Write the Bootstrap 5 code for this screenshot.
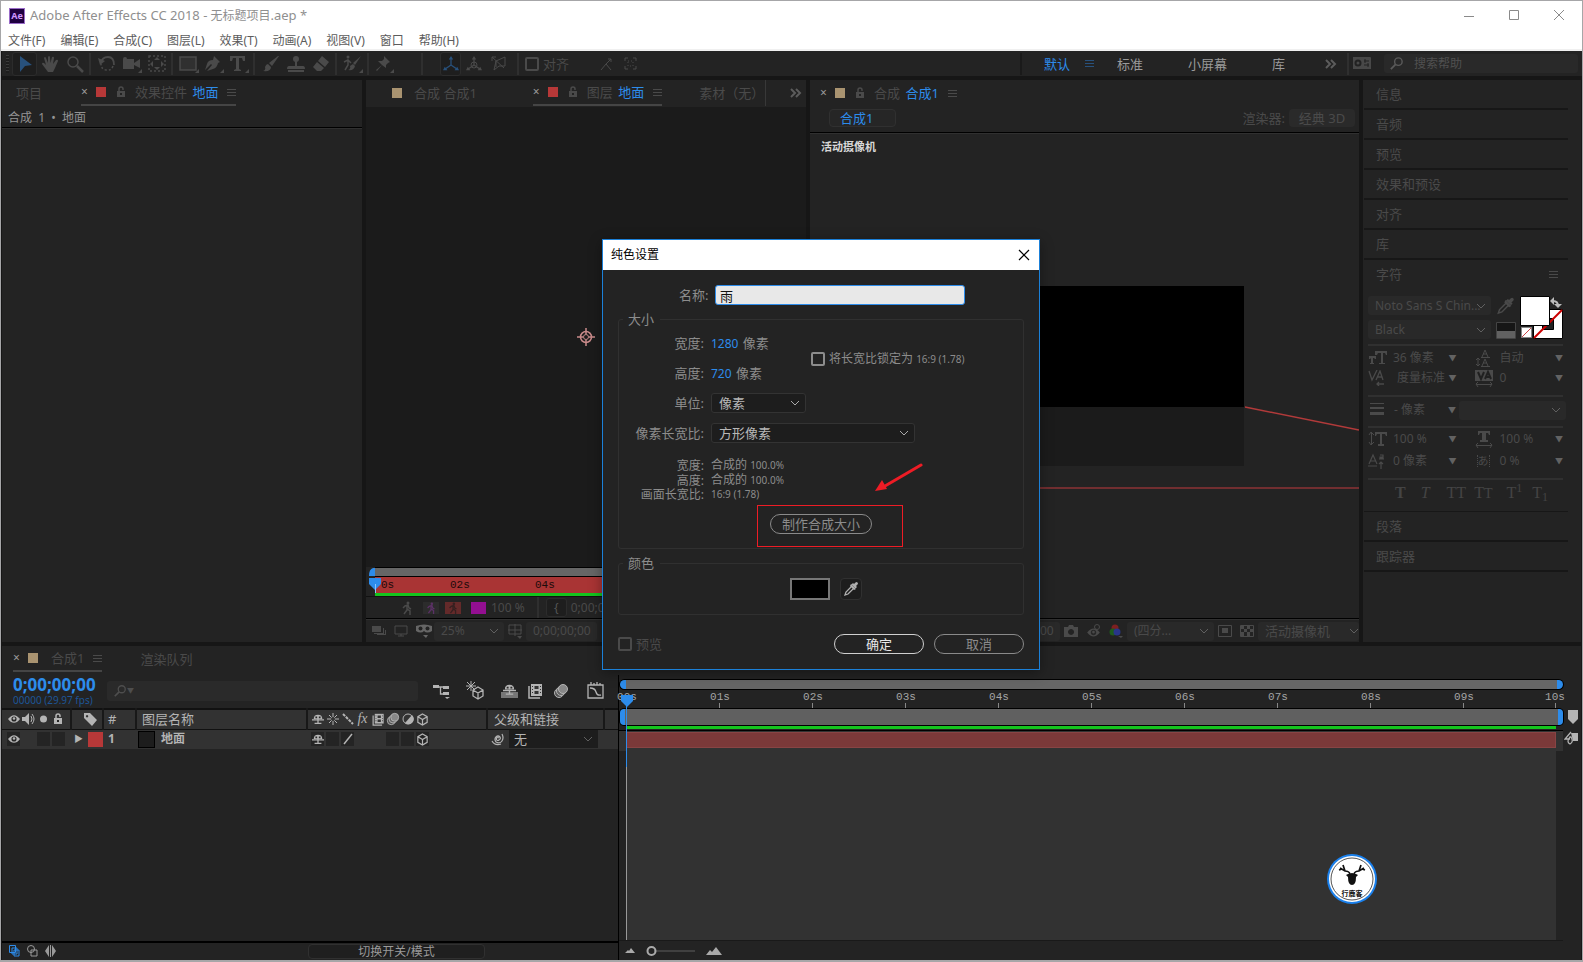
<!DOCTYPE html>
<html lang="zh-CN">
<head>
<meta charset="utf-8">
<meta name="viewport" content="width=device-width, initial-scale=1">
<title>Adobe After Effects CC 2018 - 无标题项目.aep *</title>
<link href="https://cdn.jsdelivr.net/npm/bootstrap@5.3.0/dist/css/bootstrap.min.css" rel="stylesheet">
<script src="https://cdn.jsdelivr.net/npm/bootstrap@5.3.0/dist/js/bootstrap.bundle.min.js"></script>
<style>
:root{--bg:#232323;--gap:#161616;--dim:#4a4a4a;--mid:#8c8c8c;--lit:#b4b4b4;--blue:#2d8ceb;--field:#292929}
html,body{height:100%}
body{font:13px/20px "Noto Sans","Noto Sans CJK SC",sans-serif;background:var(--gap);color:var(--dim);overflow:hidden}
button{padding:0;border:0;background:none;color:inherit;font:inherit;line-height:inherit}
a{color:inherit;text-decoration:none}
svg{flex:none;display:block;fill:currentColor}
.ln{fill:none;stroke:currentColor}
.window{min-height:100%;height:100vh;border:1px solid #a6a6a8;border-width:1px 1px 2px 1px}
.titlebar{height:29px;background:#fff;color:#8f8f8f;font-size:12px;padding-left:8px}
.titlebar .cap{width:45px;height:28px;color:#8a8a8a}
.aelogo{width:16px;height:16px;background:#1f0040;border:1px solid #9a6cc9;color:#cf96fd;font-size:9px;line-height:13px;font-weight:700;text-align:center;margin-right:5px}
.menubar{height:21px;background:#fff;border-bottom:2px solid #f0f0f0;color:#5c5c5c;font-size:12px;padding:2px 0 0 7px;gap:15px}
.toolbar{height:25px;background:var(--bg);margin-left:1px}
.tool{width:25px;height:24px;display:flex;align-items:center;justify-content:center}
.tool.on{background:#1e1e1e;border:1px solid #2c2c2c;border-radius:3px;color:#28517c}
.vsep{width:2px;height:22px;background:#2f2f2f;margin:0 3px 0 2px;flex:none}
.grip{width:3px;height:18px;margin:0 3px 0 4px;background:repeating-linear-gradient(#3a3a3a 0 1px,#1d1d1d 1px 3px)}
.tick{appearance:none;width:14px;height:14px;border:2px solid currentColor;border-radius:2px;margin:0;flex:none;background:transparent;color:inherit}
.helpbox{width:194px;height:19px;background:var(--field);border-radius:3px;margin-right:4px;padding-left:5px}
.helpbox input,.quick input{background:none;border:0;outline:0;color:inherit;font-size:12px;padding:0;width:120px}
.helpbox input{margin-left:10px}
.helpbox input::placeholder{color:#505050}
.upper{display:grid;grid-template-columns:minmax(0,360fr) minmax(0,440fr) minmax(0,549fr) minmax(0,218fr);gap:4px;margin:4px 1px;flex:1;min-height:0}
.pane{background:var(--bg);min-width:0;min-height:0;display:flex;flex-direction:column;position:relative}
.tabs{height:27px;display:flex;align-items:stretch;white-space:nowrap;overflow:hidden;flex:none}
.tabx{display:flex;align-items:center;height:26px}
.tabx.cur{border-bottom:2px solid #454545}
.tabx .bl{margin-left:2px}
.tabx .lk{margin:0 9px 0 10px}
.tabx .hm{margin-left:9px}
.x{color:#9a9a9a;font-size:12px;width:7px;line-height:20px}
.sw{width:10px;height:10px;flex:none}
.red{background:#b73838}.tan{background:#a99370}
.bl{color:var(--blue)}
.rule{height:2px;background:#000;border-bottom:1px solid #303030;flex:none}
.crumb{height:20px;padding-left:6px;font-size:12px;color:#949494;line-height:22px;word-break:keep-all}
.stage{flex:1;min-height:0;position:relative;background:#1b1b1b}
.overlay{position:absolute}
.foot{height:22px;display:flex;align-items:center;flex:none;white-space:nowrap;overflow:hidden;font-size:12px}
.sel{appearance:none;border:0;border-radius:3px;background:var(--field) url("data:image/svg+xml,%3Csvg xmlns='http://www.w3.org/2000/svg' width='10' height='6'%3E%3Cpath d='M1 1l4 4 4-4' fill='none' stroke='%23606060'/%3E%3C/svg%3E") no-repeat right 5px center;color:inherit;font-size:12px;height:19px;padding:0 7px;line-height:18px}
.acc{height:28px;line-height:26px;padding-left:13px;flex:none;text-align:left;display:block;width:100%}
.accline{height:2px;background:#171717;margin:0 13px 0 1px;flex:none}
.chline{height:2px;background:#303030;margin-right:3px}
.chrow{display:grid;grid-template-columns:25px minmax(0,1fr) 14px 15px 25px minmax(0,1fr) 14px;align-items:center;height:20px;white-space:nowrap;font-size:12px}
.chrow button,.arw{font-size:8px;text-align:center;color:#626262}
.tall .chrow{height:22px}
.serif{font-family:"Liberation Serif",serif;font-weight:700;font-size:18px;color:#444}
.timeline{height:314px;background:var(--bg);margin:0 1px;display:grid;grid-template-columns:minmax(0,617fr) minmax(0,962fr);grid-template-rows:29px 1fr;flex:none}
.tc{font-size:17px;font-weight:700;line-height:18px;color:var(--blue)}
.fps{font-size:10px;line-height:12px;color:#1d5596}
.quick{width:311px;height:20px;background:#2a2a2a;border-radius:3px;padding-left:6px}
.lay{table-layout:fixed;width:100%;border-collapse:collapse;color:var(--lit);line-height:18px;background:#323232}
.lay td,.lay th{padding:0;height:20px;border-top:2px solid #111;font-weight:400;white-space:nowrap;overflow:hidden}
.lay td{border-top-width:1px}
.lay th{border-right:2px solid #181818}
.cell{width:13px;height:14px;margin-right:2px;display:flex;align-items:center;justify-content:center;background:#242424}
.cell.no{background:none}
.hic{width:15px;display:flex;justify-content:center}
.tr{position:relative;display:flex;flex-direction:column;min-width:0;margin-right:18px}
.nav-strip{height:9px;background:#666;border:solid var(--blue);border-width:0 6px;border-radius:5px;box-shadow:0 0 0 1px #000}
.ruler{display:grid;grid-template-columns:repeat(10,minmax(0,1fr));height:20px;margin:0 7px 0 7px}
.ruler span{border-left:1px solid #777;border-image:linear-gradient(transparent 70%,#888 70%) 1;height:20px;font:11px/17px "Liberation Mono",monospace;color:#a5a5a5}
.ruler b{font-weight:400;display:block;width:30px;margin-left:-15px;text-align:center}
.wa{height:16px;background:#606060;border:solid var(--blue);border-width:0 5px;border-radius:4px;box-shadow:0 0 0 1px #000}
.green{height:3px;background:#14c41e;margin:1px 7px 1px 7px}
.dialogbox{position:absolute;left:602px;top:239px;width:438px;background:var(--bg);border:1px solid #1b80d8;color:var(--mid);box-shadow:0 3px 12px rgba(0,0,0,.35)}
.dhead{height:30px;background:#fff;color:#000;font-size:12px;padding:0 9px 0 8px}
.dbody{padding:15px 15px 15px}
.nm{width:250px;height:20px;border:1px solid var(--blue);border-radius:3px;background:#e8e8e8;color:#111;padding:0 4px;font-size:13px;line-height:18px;outline:0}
.grp{border:1px solid #303030;border-radius:3px;position:relative;padding:0;margin:0}
.grp legend{float:none;width:auto;font-size:13px;line-height:20px;padding:0 6px 0 5px;margin:0 0 0 4px;height:20px}
.drow{display:grid;grid-template-columns:85px 1fr;column-gap:7px;height:30px;align-items:center}
.drow>label,.drow>span:first-child{text-align:right;white-space:nowrap}
.num{font-size:12px;margin-right:1px}
.irow{height:15px;font-size:12px;line-height:15px}
.dsel{background-color:#1d1d1d;border:1px solid #333;color:#b8b8b8;height:20px;font-size:13px;background-image:url("data:image/svg+xml,%3Csvg xmlns='http://www.w3.org/2000/svg' width='10' height='6'%3E%3Cpath d='M1 1l4 4 4-4' fill='none' stroke='%23aaa'/%3E%3C/svg%3E")}
.pill{height:20px;border:1px solid #8a8a8a;border-radius:10px;line-height:18px;text-align:center}
.mini{font-size:10px}
</style>
</head>
<body>
<svg width="0" height="0" class="position-absolute">
<symbol id="lock" viewBox="0 0 10 12"><path d="M1 5h8v6H1z"/><path class="ln" stroke-width="1.5" d="M3 5V3a2 2 0 0 1 4 0v1"/><path fill="#232323" d="M4 7h2v2H4z"/></symbol>
<symbol id="ham" viewBox="0 0 9 9"><path class="ln" d="M0 1.5h9M0 4.5h9M0 7.5h9"/></symbol>
<symbol id="chev2" viewBox="0 0 12 10"><path class="ln" stroke-width="2" d="M1 1l4 4-4 4M6 1l4 4-4 4"/></symbol>
<symbol id="mag" viewBox="0 0 16 16"><circle class="ln" stroke-width="1.5" cx="10" cy="6" r="4"/><path class="ln" stroke-width="2" d="M7 9l-5 5"/></symbol>
<symbol id="eye" viewBox="0 0 14 10"><path d="M0 5q7-9 14 0q-7 9-14 0z"/><circle cx="7" cy="5" r="3" fill="#282828"/><circle cx="7" cy="4.500" r="1.500"/></symbol>
<symbol id="drop" viewBox="0 0 16 16"><path d="M9 3l1-1 1 1 1.500-1.500q1-1 2 0t0 2L13 5l1 1-1 1-1 0-4-4z"/><path d="M8 3l5 5-2 1-4-4z"/><path class="ln" stroke-width="1.300" d="M9 5l-6 6-1 3 3-1 6-6"/></symbol>
<symbol id="cube" viewBox="0 0 14 14"><path class="ln" stroke-width="1.300" d="M7 1l5 3v6l-5 3-5-3V4zM2 4l5 3 5-3M7 7v6"/></symbol>
<symbol id="shy" viewBox="0 0 14 14"><path d="M2 7q0-5 5-5t5 5z"/><path class="ln" stroke-width="1.500" d="M0 8h14M7 7v5M3 12h8"/><path fill="#292929" d="M4 4h2v2H4zM8 4h2v2H8z"/></symbol>
<symbol id="film" viewBox="0 0 16 16"><path d="M4 1h11v12H4z"/><path class="ln" stroke-width="1.500" d="M2 3v12h11"/><path fill="#333" d="M7.500 3h4v3h-4zM7.500 8h4v3h-4zM5 3h1v1H5zM5 6h1v1H5zM5 9h1v1H5zM13 3h1v1h-1zM13 6h1v1h-1zM13 9h1v1h-1z"/></symbol>
<symbol id="blur" viewBox="0 0 16 16"><circle cx="6" cy="10" r="4.500" fill="#555" stroke="currentColor"/><circle cx="8" cy="8" r="4.500" fill="#666" stroke="currentColor"/><circle cx="10" cy="6" r="4.500" fill="#888" stroke="currentColor"/></symbol>
<symbol id="man" viewBox="0 0 12 14"><circle cx="7" cy="2" r="1.500"/><path class="ln" stroke-width="1.500" d="M2 7l2-2 3-1 1 3 2 1M6 5v4l-3 4M6 8l3 2v4"/></symbol>
<symbol id="spiral" viewBox="0 0 14 14"><path class="ln" stroke-width="1.200" d="M8 6a1.500 1.500 0 1 0 0 2q2-1 1-3-2-2-4 0t0 5q4 2 6-1t0-7M1 9q3 5 9 3"/></symbol>
<symbol id="axis" viewBox="0 0 18 18"><path class="ln" stroke-width="1.400" d="M9 10V2M9 10l-7 5M9 10l7 5"/><path d="M9 0l2.500 4h-5zM0 16l2-4 3 4zM18 16l-2-4-3 4z"/></symbol>
</svg>

<div class="window d-flex flex-column">
  <header class="titlebar d-flex align-items-center">
    <span class="aelogo">Ae</span><span><span style="font-size:13px">Adobe After Effects CC 2018 -</span> 无标题项目<span style="font-size:13px">.aep *</span></span>
    <div class="ms-auto d-flex">
      <button class="cap d-flex justify-content-center align-items-center" aria-label="最小化"><svg width="11" height="11"><path class="ln" d="M0 6.500h10"/></svg></button>
      <button class="cap d-flex justify-content-center align-items-center" aria-label="最大化"><svg width="11" height="11"><path class="ln" d="M.5.500h9v9h-9z"/></svg></button>
      <button class="cap d-flex justify-content-center align-items-center" aria-label="关闭"><svg width="11" height="11"><path class="ln" d="M0 0l10 10M10 0L0 10"/></svg></button>
    </div>
  </header>
  <nav class="menubar d-flex align-items-center">
    <a href="#">文件(F)</a><a href="#">编辑(E)</a><a href="#">合成(C)</a><a href="#">图层(L)</a><a href="#">效果(T)</a><a href="#">动画(A)</a><a href="#">视图(V)</a><a href="#">窗口</a><a href="#">帮助(H)</a>
  </nav>

  <div class="toolbar d-flex align-items-center">
    <span class="grip"></span>
    <button class="tool on" aria-label="选取"><svg width="14" height="18"><path d="M2 1l12 9-7 1-5 6z"/></svg></button>
    <button class="tool" aria-label="手形"><svg width="18" height="18"><path d="M7 17L1 9q0-2 2-1l2 2L3 3q1-2 2 0l2 5V2q1-2 2 0l.5 6L11 2q2-1 2 1l-1 6 3-4q2-1 2 1l-3 7-2 4z"/></svg></button>
    <button class="tool" aria-label="缩放"><svg width="18" height="18"><circle class="ln" stroke-width="1.500" cx="7" cy="7" r="5"/><path class="ln" stroke-width="2.500" d="M11 11l6 6"/></svg></button>
    <i class="vsep"></i>
    <button class="tool" aria-label="旋转"><svg width="18" height="18"><path class="ln" stroke-width="1.800" d="M3 8q1-6 7-6t6 8"/><path class="ln" stroke-width="1.500" stroke-dasharray="2 2" d="M15 11q-2 5-7 4t-5-6"/><path d="M0 3l2 7 5-4z"/></svg></button>
    <button class="tool" aria-label="摄像机"><svg width="20" height="18"><path d="M1 4h11v10H1zM12 8l6-4v9l-6-3zM20 14v4h-4z"/><circle cx="3" cy="4" r="2"/></svg></button>
    <button class="tool" aria-label="向后平移"><svg width="18" height="18"><path class="ln" stroke-width="1.500" stroke-dasharray="2 2" d="M1 1h16v15H1z"/><path d="M9 2l3 3H6zM9 15l3-3H6zM2 9l3-3v6zM16 9l-3-3v6z"/></svg></button>
    <i class="vsep"></i>
    <button class="tool" aria-label="矩形"><svg width="20" height="18"><path fill="#303030" stroke="currentColor" stroke-width="1.500" d="M1 2h16v13H1z"/><path d="M20 14v4h-4z"/></svg></button>
    <button class="tool" aria-label="钢笔"><svg width="20" height="18"><path d="M10 1l6 6-2 1q-1 5-5 6l-6 2 5-6-1-1-6 6 2-6q1-4 6-4zM20 14v4h-4z"/></svg></button>
    <button class="tool" aria-label="文字"><svg width="20" height="18"><path d="M1 1h15v5h-2L13 3H10v11l2 1v1H5v-1l2-1V3H4L3 6H1zM20 14v4h-4z"/></svg></button>
    <i class="vsep"></i>
    <button class="tool" aria-label="画笔"><svg width="18" height="18"><path d="M17 1l-7 10-3-3 9-7zM6 9l3 3q0 5-8 4 3-1 2-4 1-3 3-3z"/></svg></button>
    <button class="tool" aria-label="仿制图章"><svg width="18" height="18"><circle cx="9" cy="4" r="3"/><path d="M8 6h2v5h6q2 0 2 3H0q0-3 2-3h6zM1 15h16v2H1z"/></svg></button>
    <button class="tool" aria-label="橡皮擦"><svg width="18" height="18"><path d="M10 1l7 6-4 5-7-6zM5 7l7 6-3 3H5l-4-4z"/></svg></button>
    <i class="vsep"></i>
    <button class="tool" aria-label="Roto 笔刷"><svg width="20" height="18"><circle cx="5" cy="2" r="1.500"/><path class="ln" stroke-width="1.500" d="M1 7l4-2 3 3M5 5v5l-3 5"/><path d="M18 1l-6 9-2-2zM10 9l2 2q-1 5-7 4 3-1 2-4zM20 14v4h-4z"/></svg></button>
    <i class="vsep"></i>
    <button class="tool" aria-label="操控点"><svg width="20" height="18"><path d="M9 1l6 6-2 1-2 2v3L7 10l-5 6-1-1 6-5-4-4h4l2-2zM19 14v4h-4z"/></svg></button>
    <i class="vsep" style="margin-left:24px;margin-right:17px"></i>
    <button class="tool on" style="width:21px" aria-label="本地轴"><svg width="16" height="16"><use href="#axis"/></svg></button>
    <button class="tool" aria-label="世界轴"><svg width="16" height="16"><use href="#axis"/><circle class="ln" cx="8" cy="9" r="3"/></svg></button>
    <button class="tool" aria-label="视图轴"><svg width="16" height="16"><path class="ln" d="M5 5l9-4v9l-6 0-5 4zM1 1l12 11M1 5V1h4M5 5v6"/></svg></button>
    <i class="vsep" style="margin:0 6px 0 6px"></i>
    <input class="tick" type="checkbox" id="snap"><label class="ms-1" for="snap">对齐</label>
    <button class="tool ms-4" aria-label="边缘"><svg width="14" height="14"><path class="ln" d="M2 13l5-6 5 6M7 7l5-5M9 2h3v3"/></svg></button>
    <button class="tool" aria-label="折叠"><svg width="14" height="14"><path class="ln" d="M1 4V1h3M9 1h3v3M12 9v3H9M4 12H1V9"/><path class="ln" stroke-dasharray="1 2" d="M4 4h5v5H4z"/></svg></button>
    <div class="ms-auto d-flex align-items-center" style="color:#9a9a9a">
      <i class="vsep" style="background:#1a1a1a;margin-right:22px"></i>
      <button class="bl">默认</button><svg style="color:#28517c;margin-left:15px" width="9" height="9"><use href="#ham"/></svg>
      <button style="margin-left:23px">标准</button><button style="margin-left:45px">小屏幕</button><button style="margin-left:45px">库</button>
      <svg style="margin-left:40px;margin-right:8px;color:#5c5c5c" width="12" height="10"><use href="#chev2"/></svg>
      <i class="vsep"></i><svg width="32" height="13" style="color:#484848"><path d="M1 0h17q1 0 1 1v11H1z"/><circle cx="6" cy="6" r="2.500" class="ln" style="stroke:#222;stroke-width:2"/><path style="stroke:#222" d="M12 4h5M12 8h5M13 2v4M16 6v4"/></svg>
      <div class="helpbox d-flex align-items-center"><svg width="15" height="15" style="color:#5a5a5a"><use href="#mag"/></svg><input type="search" placeholder="搜索帮助" aria-label="搜索帮助"></div>
    </div>
  </div>

  <main class="upper">
    <section class="pane">
      <div class="tabs"><a href="#" class="tabx" style="margin:0 39px 0 14px">项目</a>
        <div class="tabx cur"><span class="x">×</span><i class="sw red ms-2"></i><svg class="lk" width="10" height="12"><use href="#lock"/></svg><span>效果控件 <span class="bl">地面</span></span><svg class="hm" width="9" height="9"><use href="#ham"/></svg></div></div>
      <div class="crumb">合成&nbsp; 1 &nbsp;•&nbsp; 地面</div><div class="rule"></div>
    </section>

    <section class="pane">
      <div class="tabs"><a href="#" class="tabx" style="margin:0 56px 0 26px"><i class="sw tan me-2"></i><span class="ps-1">合成 合成1</span></a>
        <div class="tabx cur"><span class="x">×</span><i class="sw red ms-2"></i><svg class="lk" width="10" height="12"><use href="#lock"/></svg><span>图层 <span class="bl">地面</span></span><svg class="hm" width="9" height="9"><use href="#ham"/></svg></div>
        <a href="#" class="tabx overflow-hidden" style="margin-left:37px;width:67px;border-right:1px solid #383838">素材（无）</a>
        <svg class="ms-auto me-1 mt-2" style="color:#5c5c5c" width="12" height="10"><use href="#chev2"/></svg></div>
      <div class="stage">
        <svg class="overlay" style="left:50%;top:50%;margin:-9px 0 0 -9px;color:#c98a8a" width="18" height="18"><circle class="ln" stroke-width="1.500" cx="9" cy="9" r="5.500"/><circle class="ln" cx="9" cy="9" r="2.500"/><path class="ln" stroke-width="1.500" d="M9 0v6M9 12v6M0 9h6M12 9h6"/></svg>
      </div>
      <div class="position-relative" style="padding-left:9px">
        <div style="height:9px;background:#666;border-top:1px solid #000"></div>
        <div class="d-flex" style="height:17px;background:#a93434;border-top:1px solid #000;color:#1c0b0b;font:11px/17px 'Liberation Mono',monospace"><span style="width:75px;padding-left:6px">0s</span><span style="width:85px">02s</span><span>04s</span></div>
        <div style="height:3px;background:#14c41e"></div>
        <svg class="overlay" style="left:2px;top:0;color:#2d8ceb" width="16" height="27"><path d="M5 1h2v8H1Q1 2 5 1zM1 11h12v6l-6 6-6-6z"/><path stroke="#8cc4ff" d="M7.500 17v9"/></svg>
      </div>
      <div class="foot" style="padding-left:35px;border-top:1px solid #111">
        <svg width="12" height="14"><use href="#man"/></svg>
        <span style="width:16px;height:12px;background:#2c2c2c;margin:0 6px 0 10px;color:#5b3166;display:flex;justify-content:center"><svg width="12" height="12"><use href="#man"/></svg></span>
        <span style="width:16px;height:12px;background:#642a2a;margin-right:10px;display:flex;justify-content:center"><svg width="14" height="12" style="color:#352020"><use href="#man"/></svg></span>
        <i style="width:15px;height:12px;background:#930f91"></i><span style="margin-left:5px">100 %</span>
        <i class="vsep" style="margin-left:12px;margin-right:7px"></i><button class="tool on" style="height:19px;color:#555;width:21px">{</button><span class="ms-1">0;00;00;00</span>
      </div>
      <div class="rule"></div>
      <div class="foot">
        <svg style="margin-left:6px" width="14" height="12"><path d="M0 1h9v6H0zM2 8h9V3h1v6H2zM5 10h9V5h-1v4H5z"/></svg>
        <svg class="ms-2" width="14" height="12"><path class="ln" d="M1 1h12v8H1zM4 11h6M7 9v2"/></svg>
        <svg class="ms-2" width="16" height="14" style="color:#666"><path d="M0 2q8-3 16 0v5q-5 3-8 0-3 3-8 0zM7 11h5l-2 3z"/><circle cx="4.500" cy="4.500" r="2" fill="#232323"/><circle cx="11.500" cy="4.500" r="2" fill="#232323"/></svg>
        <select class="sel" style="width:70px;margin-left:2px" aria-label="放大率"><option>25%</option></select>
        <svg class="ms-1" width="14" height="15"><path class="ln" d="M1 1h12v9H1zM7 0v12M0 6h14"/><path d="M9 12h5l-2 3z"/></svg>
        <span class="sel ms-1" style="background-image:none;width:71px">0;00;00;00</span><svg class="ms-2" width="14" height="12"><path d="M0 2h10v8H0z"/></svg>
      </div>
    </section>

    <section class="pane">
      <div class="tabs"><div class="tabx" style="margin-left:10px"><span class="x">×</span><i class="sw tan ms-2"></i><svg class="lk" width="10" height="12"><use href="#lock"/></svg><span>合成 <span class="bl">合成1</span></span><svg class="hm" width="9" height="9"><use href="#ham"/></svg></div></div>
      <div class="d-flex align-items-center" style="height:25px;padding:0 4px 3px 19px">
        <button class="bl rounded-1 text-start" style="width:67px;height:18px;line-height:16px;padding-left:10px;background:#262626;border:1px solid #303030">合成1</button>
        <span class="ms-auto me-1">渲染器:</span><button class="rounded-1" style="width:66px;height:18px;line-height:18px;background:#2a2a2a">经典 3D</button>
      </div>
      <div class="rule"></div>
      <div class="stage" style="background:#232323">
        <svg class="w-100 h-100" viewBox="0 0 549 484" preserveAspectRatio="none"><path fill="#1b1b1b" d="M114 152h320v180H114z"/><path fill="#000" d="M114 152h320v121H114z"/><path class="ln" style="stroke:#b13a3a" stroke-width="1.500" d="M435 273l114 23"/><path fill="#712e30" d="M0 353h549v2H0z"/></svg>
        <span class="overlay fw-bold" style="left:11px;top:3px;color:#d8d8d8;font-size:11px">活动摄像机</span>
      </div>
      <div class="rule"></div>
      <div class="foot justify-content-end">
        <span class="sel text-end" style="background-image:none;width:71px">0;00;00;00</span>
        <svg class="mx-1" width="14" height="12"><path fill-rule="evenodd" d="M0 2h4l1-2h4l1 2h4v10H0zM7 4a3 3 0 1 0 .1 0z"/></svg>
        <svg class="mx-1" width="15" height="14"><use href="#eye" y="4" height="9"/><circle class="ln" cx="11" cy="3" r="2.500"/></svg>
        <svg class="mx-1" width="14" height="14"><circle cx="6" cy="4" r="3.500" fill="#7d2020"/><circle cx="4" cy="8" r="3.500" fill="#1e5a1e"/><circle cx="8" cy="8" r="3.500" fill="#28358a"/><path d="M9 12h5l-2 2z"/></svg>
        <select class="sel" style="width:87px" aria-label="分辨率"><option>(四分...</option></select>
        <svg class="mx-1" width="14" height="12"><path class="ln" d="M.5.500h13v11H.5z"/><path d="M4 3h6v5H4z"/></svg>
        <svg class="mx-1" width="14" height="12"><path class="ln" d="M.5.500h13v11H.5z"/><path d="M1 1h3v3H1zM7 1h3v3H7zM4 4h3v3H4zM10 4h3v3h-3zM1 7h3v4H1zM7 7h3v4H7z"/></svg>
        <select class="sel" style="width:101px;background-position:right 0 center;font-size:13px" aria-label="视图"><option>活动摄像机</option></select>
      </div>
    </section>

    <aside class="pane">
      <button class="acc">信息</button><div class="accline"></div><button class="acc">音频</button><div class="accline"></div><button class="acc">预览</button><div class="accline"></div><button class="acc">效果和预设</button><div class="accline"></div><button class="acc">对齐</button><div class="accline"></div><button class="acc">库</button><div class="accline"></div>
      <div class="acc d-flex align-items-center justify-content-between" style="padding-right:23px">字符<svg width="9" height="9"><use href="#ham"/></svg></div>
      <div style="padding:8px 15px 0 5px">
        <div class="d-flex justify-content-between" style="height:43px;margin:0 3px 5px 0">
          <div class="d-flex flex-column justify-content-between h-100"><select class="sel" style="width:123px" aria-label="字体"><option>Noto Sans S Chin...</option></select><select class="sel" style="width:123px" aria-label="字体样式"><option>Black</option></select></div>
          <div class="d-flex flex-column justify-content-between align-items-center h-100"><svg width="19" height="20"><use href="#drop"/></svg><svg width="20" height="17"><path fill="#161616" stroke="#444" d="M.5.500h19v16H.5z"/><path fill="#616161" d="M1 9h18v7H1z"/></svg></div>
          <svg width="43" height="43"><path fill="#fff" stroke="#000" d="M13.500 13.500h29v29h-29z"/><path fill="#222" stroke="#000" d="M22.500 22.500h11v11h-11z"/><path stroke="#c00" stroke-width="2" d="M14 42l28-28"/><path fill="#fff" stroke="#000" d="M.5.500h29v29H.5z"/><path fill="#fff" stroke="#888" d="M1.500 31.500h10v10h-10z"/><path stroke="#c44" d="M2 41l9-9"/><path stroke="#bbb" fill="none" stroke-width="2" d="M33 5q5 0 5 5"/><path fill="#bbb" d="M34 1v8l-4-4zM34 8h8l-4 4z"/></svg>
        </div>
        <div class="chline"></div>
        <div style="padding:2px 0 6px;margin-bottom:1px">
          <div class="chrow"><svg width="19" height="16"><path d="M7 1h12v4h-1L17 3h-2v10h2v1h-6v-1h2V3h-3L9 5H7z"/><path d="M1 6h7v3H7L6 8H5v5h1v1H2v-1h1V8L2 9H1z"/></svg><span>36 像素</span><button>▼</button><i></i><svg width="16" height="18"><path class="ln" d="M3 9v8M1 11l2-2 2 2M1 15l2 2 2-2M7 8l3-7 3 7M8 5h4M7 17l3-7 3 7M8 14h4M6 8.500h9M6 17.500h9"/></svg><span>自动</span><button>▼</button></div>
          <div class="chrow"><svg width="18" height="16"><path class="ln" stroke-width="1.300" d="M1 1l3 9 5-10M8 10l4-9 3 9M9 7h5M9 14h7M11 12l-2 2 2 2"/></svg><span class="ps-1">度量标准</span><button>▼</button><i></i><svg width="18" height="17"><path d="M0 0h18v11H0z"/><path class="ln" style="stroke:#202020;stroke-width:2" d="M3 2l3 7 3-7M10 9l3-7 3 7M11 7h4"/><path class="ln" d="M1 14.500h16M3 12l-2 2 2 3M15 12l2 2-2 3"/></svg><span>0</span><button>▼</button></div>
        </div>
        <div class="chline"></div>
        <div class="d-flex align-items-center" style="height:29px;font-size:12px;padding-bottom:3px"><svg width="18" height="14"><path d="M2 0h14v1H2zM2 4h14v2H2zM2 9h14v3H2z"/></svg><span class="ms-2">- 像素</span><button class="ms-auto arw" style="width:14px">▼</button><select class="sel" style="width:107px" aria-label="描边样式"><option></option></select></div>
        <div class="chline"></div>
        <div class="tall" style="padding:0 0 6px">
          <div class="chrow"><svg width="20" height="16"><path class="ln" d="M3.500 1v13M1 4l2-3 3 3M1 11l2 3 3-3"/><path d="M7 1h12v4h-1L17 3h-3v10h2v2h-6v-2h2V3H9L8 5H7z"/></svg><span>100 %</span><button>▼</button><i></i><svg width="18" height="18"><path d="M3 1h12v4h-1L13 3h-2v7h2v2H5v-2h2V3H5L4 5H3z"/><path class="ln" d="M1 15.500h16M3 13l-2 2 2 3M15 13l2 2-2 3"/></svg><span>100 %</span><button>▼</button></div>
          <div class="chrow"><svg width="18" height="16"><path class="ln" stroke-width="1.200" d="M1 11l4-9 4 9M2 8h6M0 13h9M11 6h5M13 16V9M11 11l2-2 2 2M12 2h3v3h-3v-1h3"/></svg><span>0 像素</span><button>▼</button><i></i><span style="font-size:11px;border:dotted #4a4a4a;border-width:0 1px;width:13px;line-height:12px;margin-left:2px">あ</span><span>0 %</span><button>▼</button></div>
        </div>
        <div class="chline"></div>
        <div class="d-flex align-items-center serif" style="height:31px;padding:0 0 5px 27px;font-weight:400;font-size:16px"><b>T</b><i style="margin-left:15px">T</i><span style="margin-left:17px">TT</span><span class="ms-2">T<small>T</small></span><span style="margin-left:14px">T<sup>1</sup></span><span style="margin-left:10px">T<sub>1</sub></span></div>
      </div>
      <div class="accline" style="height:1px"></div>
      <button class="acc">段落</button><div class="accline"></div><button class="acc">跟踪器</button><div class="accline"></div>
    </aside>
  </main>

  <section class="timeline">
    <div class="tabs" style="grid-column:1/3"><div class="tabx cur" style="margin-left:11px"><span class="x">×</span><i class="sw tan ms-2"></i><span style="margin:0 9px 0 13px">合成1</span><svg width="9" height="9"><use href="#ham"/></svg></div><a href="#" class="tabx" style="margin-left:38px">渲染队列</a></div>

    <div class="d-flex flex-column" style="border-right:1px solid #000">
      <div class="d-flex align-items-center" style="height:33px;padding:0 0 2px 11px;color:var(--lit)">
        <div style="width:94px"><div class="tc">0;00;00;00</div><div class="fps">00000 (29.97 fps)</div></div>
        <div class="quick d-flex align-items-center"><svg width="14" height="14" style="color:#4e4e4e"><use href="#mag"/></svg><small style="font-size:7px;color:#4e4e4e">▼</small><input type="search" aria-label="搜索图层"></div>
        <svg style="margin-left:15px" width="17" height="16"><path d="M0 2h6v3H0zM10 3h6v3h-6zM10 9h6v3h-6zM12 14h5l-3 2z"/><path class="ln" stroke-width="1.300" d="M6 4h4M7.500 4v7H10"/></svg>
        <svg style="margin-left:16px" width="19" height="19"><path class="ln" d="M5 0v10M0 5h10M1 1l8 8M9 1L1 9"/><use href="#cube" x="5" y="5" width="14" height="14"/></svg>
        <svg style="margin-left:16px" width="17" height="16"><path fill="#777" d="M0 9h17v6H0z"/><use href="#shy" x="2" width="13" height="13"/></svg>
        <svg style="margin-left:9px" width="16" height="16"><use href="#film"/></svg>
        <svg style="margin-left:10px" width="16" height="16"><use href="#blur"/></svg>
        <svg style="margin-left:18px" width="17" height="17"><path class="ln" stroke-width="1.300" d="M1 3h15v13H1zM3 6q5 0 6 4t5 3M4 0v3M7 1v2M10 0v3M13 1v2"/></svg>
      </div>
      <table class="lay">
        <colgroup><col style="width:69px"><col style="width:32px"><col style="width:33px"><col style="width:171px"><col style="width:180px"><col><col style="width:14px"></colgroup>
        <tr><th><div class="d-flex align-items-center" style="padding-left:6px"><svg width="12" height="10"><use href="#eye"/></svg><svg style="margin-left:2px" width="13" height="12"><path d="M0 4h3l4-4v12L3 8H0z"/><path class="ln" d="M9 3q2 3 0 6M10 1q4 5 0 10"/></svg><svg style="margin:0 6px 0 5px" width="7" height="8"><circle cx="3.500" cy="4" r="3.500"/></svg><svg width="10" height="12"><use href="#lock"/></svg></div></th>
          <th><svg class="ms-auto" style="margin-right:5px" width="14" height="14"><path fill-rule="evenodd" d="M1 1h6l7 7-5 6-8-8zM4 3a1.200 1.200 0 1 0 .1 0z"/></svg></th><th class="ps-1">#</th><th style="padding-left:5px">图层名称</th>
          <th><div class="d-flex align-items-center" style="padding-left:2px"><span class="hic"><svg width="12" height="12"><use href="#shy"/></svg></span><span class="hic"><svg width="12" height="12"><path class="ln" d="M6 0v12M0 6h12M2 2l8 8M10 2l-8 8"/><circle cx="6" cy="6" r="2" fill="#333"/></svg></span><span class="hic"><svg width="12" height="12"><path class="ln" stroke-width="2" stroke-dasharray="3 1" d="M1 1l10 10"/></svg></span><span class="hic fst-italic" style="font-family:'Liberation Serif',serif;font-size:14px">fx</span><span class="hic"><svg width="14" height="13"><use href="#film"/></svg></span><span class="hic"><svg width="14" height="14"><use href="#blur"/></svg></span><span class="hic"><svg width="12" height="12"><circle class="ln" cx="6" cy="6" r="5"/><path d="M10 2A5 5 0 0 1 3 10z"/></svg></span><span class="hic"><svg width="13" height="13"><use href="#cube"/></svg></span></div></th>
          <th style="padding-left:6px">父级和链接</th><th style="border-right:0"></th></tr>
        <tr><td><div class="d-flex" style="padding-left:5px"><span class="cell"><svg width="12" height="10"><use href="#eye"/></svg></span><span class="cell no"></span><span class="cell"></span><span class="cell"></span></div></td>
          <td><div class="d-flex align-items-center justify-content-end"><span style="font-size:9px;margin-right:5px">▶</span><i style="width:15px;height:15px;background:#b73838"></i></div></td><td class="fw-bold" style="padding-left:5px;font-size:12px">1</td>
          <td><div class="d-flex align-items-center"><i style="width:17px;height:17px;background:#1d1d1d;border:1px solid #000;margin:0 6px 0 2px"></i><b style="font-size:12px">地面</b></div></td>
          <td><div class="d-flex" style="padding-left:4px"><span class="cell"><svg width="12" height="12"><use href="#shy"/></svg></span><span class="cell"></span><span class="cell"><svg width="10" height="12"><path class="ln" stroke-width="1.500" d="M1 11l8-10"/></svg></span><span class="cell no"></span><span class="cell no"></span><span class="cell"></span><span class="cell"></span><span class="cell"><svg width="13" height="13"><use href="#cube"/></svg></span></div></td>
          <td colspan="2"><div class="d-flex align-items-center ps-1"><svg class="me-1" width="14" height="14"><use href="#spiral"/></svg><select class="sel" style="width:89px;height:18px;background-color:#1d1d1d;padding:0 5px;border-radius:0;font-size:13px" aria-label="父级"><option>无</option></select></div></td></tr>
      </table>
      <div class="mt-auto d-flex align-items-center" style="height:19px;border-top:2px solid #000;color:#9a9a9a;font-size:12px;padding-bottom:1px">
        <button aria-label="图层开关窗格" style="margin-left:7px"><svg width="11" height="12" style="color:#2d8ceb"><path class="ln" d="M.5.500h6v7h-6zM3 3h5v6H3zM5 5h5v6H5z"/></svg></button>
        <button aria-label="传递控制窗格" style="margin-left:7px"><svg width="11" height="12"><circle class="ln" cx="4" cy="4" r="3.500"/><path class="ln" d="M4 5h6v6H4z"/></svg></button>
        <button aria-label="入点出点窗格" style="margin-left:7px"><svg width="11" height="12"><path d="M4 0v12L0 6zM7 0v12l4-6zM5 0h1v12H5z"/></svg></button>
        <button class="rounded-1" style="width:177px;height:15px;line-height:13px;border:1px solid #303030;background:#1f1f1f;margin-left:252px">切换开关/模式</button>
      </div>
    </div>

    <div class="tr">
      <div style="height:5px"></div>
      <div class="nav-strip" style="margin-left:1px"></div>
      <div class="ruler"><span><b>00s</b></span><span><b>01s</b></span><span><b>02s</b></span><span><b>03s</b></span><span><b>04s</b></span><span><b>05s</b></span><span><b>06s</b></span><span><b>07s</b></span><span><b>08s</b></span><span class="d-flex justify-content-between" style="border-right:1px solid #777"><b>09s</b><b style="margin-right:-15px">10s</b></span></div>
      <div class="wa" style="margin-left:1px"></div>
      <div class="green"></div>
      <div style="border-top:1px solid #000;height:21px;background:#323232;padding:1px 7px 3px 7px"><div class="h-100" style="background:#7b3939;border:1px solid #844"></div></div>
      <div class="flex-fill" style="background:#323232;margin:0 7px 0 7px"></div>
      <div class="d-flex align-items-center" style="height:20px;color:#aaa;border-top:1px solid #191919"><svg style="margin-left:6px" width="10" height="6"><path d="M0 5l3-3 1 1 2-3 4 5z"/></svg>
        <svg style="margin-left:11px" width="49" height="12"><path fill="#404040" d="M8 5h41v2H8z"/><circle class="ln" stroke-width="2" cx="5.500" cy="6" r="4"/></svg><svg style="margin-left:11px" width="16" height="8"><path d="M0 8l4-5 2 2 4-5 6 8z"/></svg></div>
      <svg class="overlay" style="left:2px;top:19px;color:#2d8ceb" width="13" height="13"><path d="M0 1h12v6l-6 6-6-6z"/></svg>
      <i class="overlay" style="left:7px;top:22px;bottom:20px;width:1px;background:linear-gradient(#2d8ceb 70px,#999 70px)"></i>
      <svg class="overlay" style="right:-16px;top:35px;color:#b4b4b4" width="12" height="14"><path d="M1 0h10v9l-5 5-5-5z"/></svg>
      <svg class="overlay" style="right:-15px;top:56px;color:#b4b4b4" width="14" height="14"><path d="M7 2h7v8H9z"/><path class="ln" stroke-width="1.300" d="M7 1L1 8l5 0M6 6q-4 5 0 7 4-2 1-7z"/></svg>
      <svg class="overlay" style="right:185px;bottom:55px" width="52" height="52"><circle cx="26" cy="26" r="25" fill="#1a80ec"/><circle cx="26" cy="26" r="23" fill="#fff"/><circle cx="26" cy="26" r="21" fill="#fff" stroke="#555"/><path fill="#111" d="M22 21l4-1 4 1 2 1-2 2q0 8-4 8t-4-8l-2-2z"/><path fill="none" stroke="#111" stroke-width="1.700" d="M24 21q-1-3-5-3l-5-3M19 18l-2-6M16 16l-3 1M28 21q1-3 5-3l5-3M33 18l2-6M36 16l3 1"/><text x="26" y="43" font-size="7" font-weight="700" text-anchor="middle" fill="#111">行鹿客</text></svg>
    </div>
  </section>

  <div class="dialogbox" role="dialog" aria-labelledby="dlgTitle">
    <div class="dhead d-flex align-items-center justify-content-between"><span id="dlgTitle">纯色设置</span><button aria-label="关闭"><svg width="12" height="12"><path class="ln" stroke-width="1.200" d="M1 1l10 10M11 1L1 11"/></svg></button></div>
    <form class="dbody">
      <div class="d-flex align-items-center" style="margin-left:61px"><label for="nm" style="width:36px;white-space:nowrap;line-height:18px">名称:</label><input class="nm" id="nm" value="雨"></div>
      <fieldset class="grp" style="margin-top:4px;height:240px"><legend>大小</legend>
        <div style="margin-top:-1px">
          <div class="drow"><span>宽度:</span><span><span class="bl num">1280</span> 像素</span></div>
          <div class="drow"><span>高度:</span><span><span class="bl num">720</span> 像素</span></div>
          <div class="drow"><label for="unit">单位:</label><select class="sel dsel" id="unit" style="width:95px"><option>像素</option></select></div>
          <div class="drow"><label for="par">像素长宽比:</label><select class="sel dsel" id="par" style="width:204px"><option>方形像素</option></select></div>
        </div>
        <div style="margin-top:9px">
          <div class="drow irow"><span>宽度:</span><span>合成的 <span class="mini">100.0%</span></span></div>
          <div class="drow irow"><span>高度:</span><span>合成的 <span class="mini">100.0%</span></span></div>
          <div class="drow irow"><span>画面长宽比:</span><span class="mini">16:9 (1.78)</span></div>
        </div>
        <button type="button" class="pill d-block" style="width:102px;margin:12px 0 0 151px">制作合成大小</button>
        <div class="overlay d-flex align-items-center text-nowrap" style="left:192px;top:20px;font-size:12px"><input class="tick me-1" type="checkbox" id="lk"><label for="lk">将长宽比锁定为 <span class="mini">16:9 (1.78)</span></label></div>
        <div class="overlay" style="left:138px;bottom:1px;width:146px;height:42px;border:1px solid #ee1c25"></div>
        <svg class="overlay" style="left:256px;top:132px;color:#ee1c25" width="48" height="32"><path class="ln" stroke-width="3" stroke-linecap="round" d="M46 4L10 25"/><path d="M0 30l7-11 5 9z"/></svg>
      </fieldset>
      <fieldset class="grp" style="margin-top:4px;height:62px"><legend>颜色</legend>
        <div class="d-flex justify-content-center" style="gap:10px;padding-left:9px;padding-top:5px"><button type="button" aria-label="颜色" style="width:40px;height:22px;background:#000;border:2px solid #777"></button><button type="button" aria-label="吸管" class="rounded-1 d-flex align-items-center justify-content-center" style="width:22px;height:22px;background:#1d1d1d;border:1px solid #303030;color:#b0b0b0"><svg width="16" height="16"><use href="#drop"/></svg></button></div>
      </fieldset>
      <div class="d-flex align-items-center" style="margin-top:19px"><input class="tick" style="color:#4a4a4a" type="checkbox" id="pv"><label class="ms-1" for="pv" style="color:#4a4a4a">预览</label><button type="button" class="pill ms-auto" style="width:90px;color:#e8e8e8;border-color:#d0d0d0">确定</button><button type="button" class="pill" style="width:90px;margin-left:10px">取消</button></div>
    </form>
  </div>
</div>
</body>
</html>
